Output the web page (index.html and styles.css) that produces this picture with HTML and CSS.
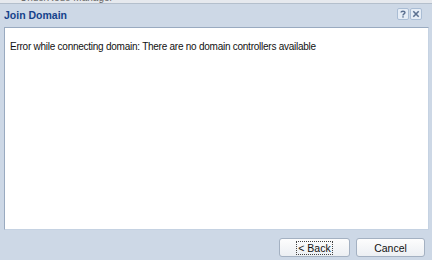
FILE: index.html
```html
<!DOCTYPE html>
<html>
<head>
<meta charset="utf-8">
<link rel="stylesheet" href="styles.css">
</head>
<body>
<div class="bgstrip"><span class="bgtext">Undo/Redo Manager</span></div>
<div class="dialog">
  <div class="header">
    <span class="title">Join Domain</span>
    <div class="tools">
      <span class="tool">
        <svg width="12" height="12" viewBox="0 0 12 12"><rect x="0.5" y="0.5" width="11" height="11" rx="1.5" fill="#e6edf6" stroke="#aabdd4"/><path d="M4 4.6 C4 2.8 8 2.8 8 4.6 C8 5.9 6 5.9 6 7.4" fill="none" stroke="#5b7090" stroke-width="1.4"/><rect x="5.3" y="8.2" width="1.4" height="1.4" fill="#5b7090"/></svg>
      </span>
      <span class="tool">
        <svg width="12" height="12" viewBox="0 0 12 12"><rect x="0.5" y="0.5" width="11" height="11" rx="1.5" fill="#e6edf6" stroke="#aabdd4"/><path d="M3.3 3.3 L8.7 8.7 M8.7 3.3 L3.3 8.7" stroke="#5b7090" stroke-width="1.6"/></svg>
      </span>
    </div>
  </div>
  <div class="body">
    <p class="msg">Error while connecting domain: There are no domain controllers available</p>
  </div>
  <div class="footer">
    <button class="btn btn-back"><span class="focus">&lt; Back</span></button>
    <button class="btn btn-cancel">Cancel</button>
  </div>
</div>
</body>
</html>
```
FILE: styles.css
```css
html, body {
  margin: 0;
  padding: 0;
}
body {
  width: 432px;
  height: 260px;
  overflow: hidden;
  background: #cdd8e6;
  font-family: "Liberation Sans", Arial, sans-serif;
}
.bgstrip {
  height: 3px;
  overflow: hidden;
  background: #e6e9ee;
  border-bottom: 1px solid #b4bfcc;
  padding-left: 20px;
}
.bgtext {
  display: block;
  margin-top: -7px;
  font-size: 10px;
  line-height: 10px;
  color: #666;
}
.dialog {
  display: flex;
  flex-direction: column;
  height: 256px;
}
.header {
  height: 23px;
  display: flex;
  align-items: flex-start;
  justify-content: space-between;
  padding: 0 10px 0 4px;
}
.title {
  font-weight: bold;
  font-size: 10.5px;
  line-height: 13px;
  margin-top: 5px;
  color: #15428b;
}
.tools {
  display: flex;
  gap: 1px;
  margin-top: 4px;
}
.tool {
  display: block;
  width: 12px;
  height: 12px;
}
.tool svg { display: block; }
.body {
  margin: 0 3px 0 4px;
  height: 201px;
  background: #fff;
  border: 1px solid #99aac0;
  border-right-color: #c5d2e2;
  border-bottom-color: #c5d2e2;
}
.msg {
  margin: 12px 0 0 5px;
  font-size: 10px;
  letter-spacing: -0.25px;
  line-height: 13px;
  color: #111;
}
.footer {
  display: flex;
  justify-content: flex-end;
  gap: 6px;
  padding: 8px 7px 0 0;
}
.btn {
  height: 19px;
  padding: 0;
  border: 1px solid #a4b1c2;
  border-radius: 3px;
  background: linear-gradient(#fdfdfd, #eceff3);
  font-family: "Liberation Sans", Arial, sans-serif;
  font-size: 10.5px;
  color: #111;
  display: flex;
  align-items: center;
  justify-content: center;
  white-space: nowrap;
}
.btn-back { width: 71px; }
.btn-cancel { width: 69px; }
.focus {
  border: 1px dotted #444;
  padding: 0 1px;
  line-height: 12px;
  white-space: nowrap;
}
```
